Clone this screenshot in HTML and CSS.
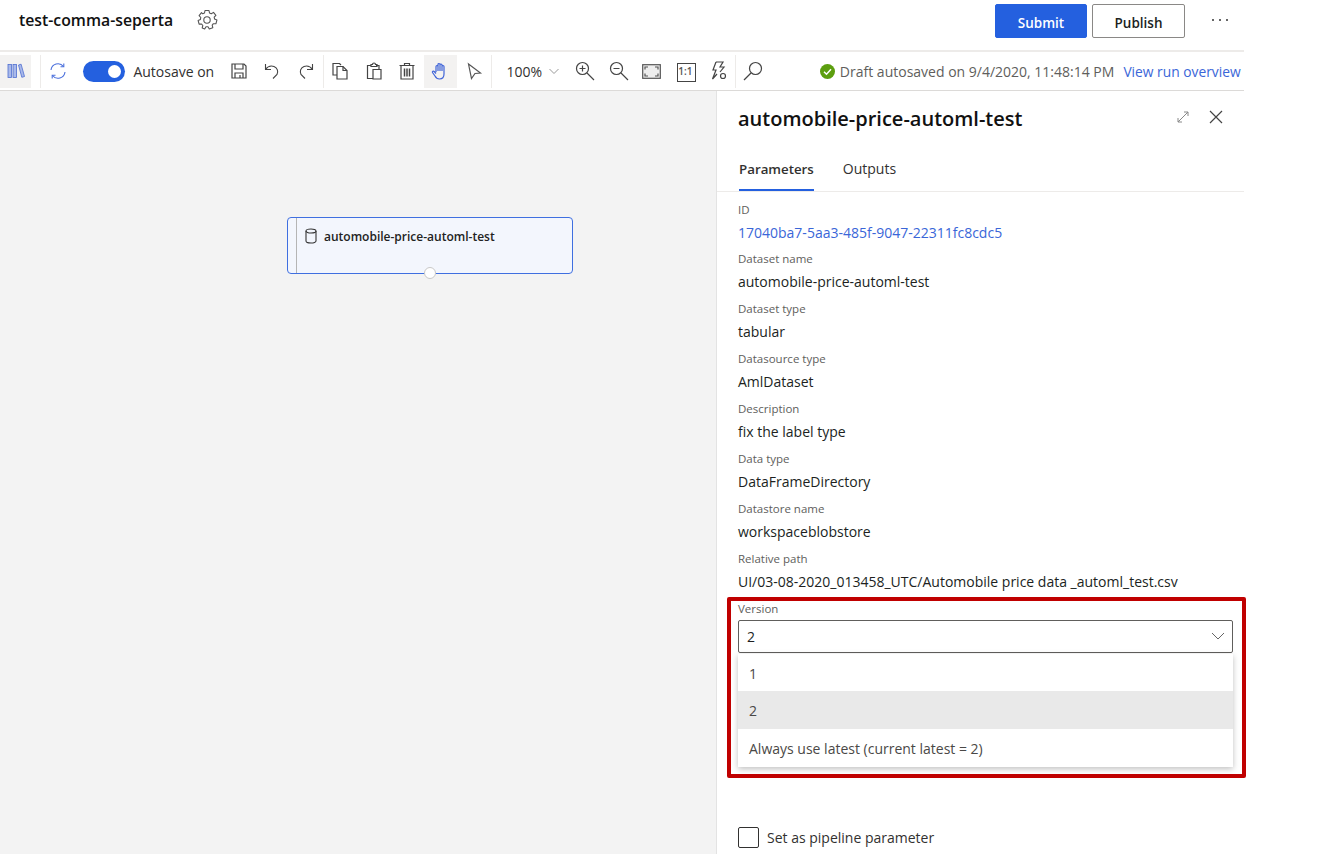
FILE: index.html
```html
<!DOCTYPE html>
<html lang="en">
<head>
  <meta charset="UTF-8" />
  <title>test-comma-seperta</title>
  <link rel="stylesheet" href="styles.css">
</head>
<body>
  <div class="app">
    <header class="topbar">
      <h1 class="title">test-comma-seperta</h1>
      <svg class="gear" width="22" height="22" viewBox="0 0 22 22" fill="none" stroke="#555" stroke-width="1.1"><path d="M9 1.500h4l.5 2.500 1.800.8 2.200-1.400 2.400 2.900-1.700 1.900.4 1.900 2.300 1-1 3.700-2.500-.1-1.200 1.500.6 2.500-3.500 1.300-1.300-2.200h-2l-1.300 2.200L6.200 19l.6-2.500-1.200-1.500-2.500.1-1-3.700 2.300-1 .4-1.900-1.700-1.900 2.400-2.900L6.700 4.800l1.800-.8z" stroke-linejoin="round"/><circle cx="11" cy="11" r="3.200"/></svg>
      <div class="top-actions">
        <button class="btn primary">Submit</button>
        <button class="btn">Publish</button>
        <svg class="more" width="18" height="4" viewBox="0 0 18 4" fill="#333"><circle cx="2" cy="2" r="1"/><circle cx="9" cy="2" r="1"/><circle cx="16" cy="2" r="1"/></svg>
      </div>
    </header>

    <div class="toolbar">
      <span class="tool first active">
        <svg width="18" height="16" viewBox="0 0 18 16" fill="#a9b9ea" stroke="#4f6fd0" stroke-width=".8"><rect x="1" y="1.500" width="3.500" height="13"/><rect x="6" y="1.500" width="3.500" height="13"/><path d="M11.500 2l2.600-.8 3.400 12.300-2.700.8z"/></svg>
      </span>
      <span class="sep"></span>
      <span class="tool">
        <svg width="18" height="18" viewBox="0 0 18 18" fill="none" stroke="#4a6fdc" stroke-width="1.100"><path d="M2 8a7 7 0 0 1 12.500-3.500M16 10a7 7 0 0 1-12.500 3.500"/><path d="M14.800 1.500v3.300h-3.300M3.200 16.500v-3.300h3.300"/></svg>
      </span>
      <span class="toggle"><span class="knob"></span></span>
      <span class="autosave">Autosave on</span>
      <span class="tool">
        <svg width="18" height="18" viewBox="0 0 18 18" fill="none" stroke="#444" stroke-width="1.200"><path d="M2 2h12l2 2v12H2z"/><path d="M5 2v5h8V2M5 16v-5h8v5M10 13v3"/></svg>
      </span>
      <span class="tool">
        <svg width="18" height="18" viewBox="0 0 18 18" fill="none" stroke="#444" stroke-width="1.100"><path d="M2.500 2v5.500H8"/><path d="M2.500 7.500C5 4 8 3.500 11 4.500c3.500 1.500 4.500 5 3 8l-4 4"/></svg>
      </span>
      <span class="tool">
        <svg width="18" height="18" viewBox="0 0 18 18" fill="none" stroke="#444" stroke-width="1.100"><path d="M15.500 2v5.500H10"/><path d="M15.500 7.500C13 4 10 3.500 7 4.500c-3.500 1.500-4.500 5-3 8l4 4"/></svg>
      </span>
      <span class="sep"></span>
      <span class="tool">
        <svg width="18" height="18" viewBox="0 0 18 18" fill="none" stroke="#444" stroke-width="1.200"><path d="M6 13H2V1.500h6.500L10 3"/><path d="M6 4.500h6l4 4v8.500H6z"/><path d="M12 4.500v4h4"/></svg>
      </span>
      <span class="tool">
        <svg width="18" height="18" viewBox="0 0 18 18" fill="none" stroke="#444" stroke-width="1.200"><path d="M6 3.500H2.500V16.500H8"/><path d="M11 3.500h3V7"/><path d="M6 4.500V2.500h1.500a1.500 1.500 0 0 1 3 0H12v2z"/><path d="M8 7.500h8v9.500H8z"/></svg>
      </span>
      <span class="tool">
        <svg width="18" height="18" viewBox="0 0 18 18" fill="none" stroke="#444" stroke-width="1.200"><path d="M1.500 3.500h15M6.500 3.500V1.500h5v2M3 3.500v13.500h12V3.500"/><path d="M6.500 6.500v8M9 6.500v8M11.500 6.500v8" stroke-width="1.500"/></svg>
      </span>
      <span class="tool active">
        <svg width="18" height="18" viewBox="0 0 18 18" fill="none" stroke="#3f63d8" stroke-width="1.200"><path d="M5 10V4.500a1 1 0 0 1 2 0V9M7 9V2.500a1 1 0 0 1 2 0V9M9 9V3a1 1 0 0 1 2 0v6M11 9V4.500a1 1 0 0 1 2 0V12c0 3-1.500 5-4.500 5-2.500 0-3.500-1-4.500-3L1.500 10.500c-.5-1 .8-2 1.700-1L5 11.500"/></svg>
      </span>
      <span class="tool">
        <svg width="18" height="18" viewBox="0 0 18 18" fill="none" stroke="#555" stroke-width="1.200"><path d="M3.500 2l12 9-5.500.5-3.500 5z"/></svg>
      </span>
      <span class="sep"></span>
      <span class="zoom-level">100%</span>
      <svg class="chev" width="12" height="12" viewBox="0 0 12 12" fill="none" stroke="#999"><path d="M1.500 4l4.500 4.500L10.500 4"/></svg>
      <span class="tool">
        <svg width="20" height="20" viewBox="0 0 20 20" fill="none" stroke="#444" stroke-width="1.200"><circle cx="7.500" cy="7.500" r="6"/><path d="M12 12l7 7M7.500 4.500v6M4.500 7.500h6"/></svg>
      </span>
      <span class="tool">
        <svg width="20" height="20" viewBox="0 0 20 20" fill="none" stroke="#444" stroke-width="1.200"><circle cx="7.500" cy="7.500" r="6"/><path d="M12 12l7 7M4.500 7.500h6"/></svg>
      </span>
      <span class="tool">
        <svg width="19" height="15" viewBox="0 0 19 15" fill="none" stroke="#555" stroke-width="1.200"><rect x=".7" y=".7" width="17.600" height="13.600" fill="#eee"/><path d="M3 5.500V3h3M13 3h3v2.500M3 9.500V12h3M16 9.500V12h-3"/></svg>
      </span>
      <span class="tool one-one">1:1</span>
      <span class="tool">
        <svg width="18" height="20" viewBox="0 0 18 20" fill="none" stroke="#444" stroke-width="1.200"><path d="M6 1h7l-3 5h4l-4 5M6 1L3 9h3l-3.500 9 4.500-5"/><circle cx="13" cy="15" r="2.500"/></svg>
      </span>
      <span class="sep"></span>
      <span class="tool">
        <svg width="20" height="20" viewBox="0 0 20 20" fill="none" stroke="#444" stroke-width="1.200"><circle cx="12.500" cy="7.500" r="6"/><path d="M8 12l-7 7"/></svg>
      </span>
      <span class="status">
        <svg width="15" height="15" viewBox="0 0 15 15"><circle cx="7.500" cy="7.500" r="7.500" fill="#5c9e0f"/><path d="M4 7.800l2.500 2.400L11 5.300" fill="none" stroke="#fff" stroke-width="1.500"/></svg>
        Draft autosaved on 9/4/2020, 11:48:14 PM
      </span>
      <a class="link overview">View run overview</a>
    </div>

    <div class="main">
      <div class="canvas">
        <div class="node">
          <svg width="14" height="16" viewBox="0 0 14 16" fill="none" stroke="#333" stroke-width="1.100"><ellipse cx="7" cy="3" rx="5" ry="2"/><path d="M2 3v10c0 1.100 2.200 2 5 2s5-.9 5-2V3"/></svg>
          <span class="node-name">automobile-price-automl-test</span>
          <span class="port"></span>
        </div>
      </div>

      <aside class="panel">
        <div class="panel-head">
          <h2 class="panel-title">automobile-price-automl-test</h2>
          <svg class="head-icon" width="14" height="14" viewBox="0 0 14 14" fill="none" stroke="#888"><path d="M2 12L12 2M8 2h4v4M2 8v4h4"/></svg>
          <svg class="head-icon" width="14" height="14" viewBox="0 0 14 14" fill="none" stroke="#444" stroke-width="1.200"><path d="M1 1l12 12M13 1L1 13"/></svg>
        </div>
        <div class="tabs">
          <span class="tab current">Parameters</span>
          <span class="tab">Outputs</span>
        </div>
        <div class="fields">
          <div class="field"><label>ID</label><div class="value link">17040ba7-5aa3-485f-9047-22311fc8cdc5</div></div>
          <div class="field"><label>Dataset name</label><div class="value">automobile-price-automl-test</div></div>
          <div class="field"><label>Dataset type</label><div class="value">tabular</div></div>
          <div class="field"><label>Datasource type</label><div class="value">AmlDataset</div></div>
          <div class="field"><label>Description</label><div class="value">fix the label type</div></div>
          <div class="field"><label>Data type</label><div class="value">DataFrameDirectory</div></div>
          <div class="field"><label>Datastore name</label><div class="value">workspaceblobstore</div></div>
          <div class="field"><label>Relative path</label><div class="value">UI/03-08-2020_013458_UTC/Automobile price data _automl_test.csv</div></div>
          <div class="field version">
            <label>Version</label>
            <div class="select">
              <span>2</span>
              <svg width="14" height="14" viewBox="0 0 14 14" fill="none" stroke="#666"><path d="M1 4l6 6 6-6"/></svg>
              <ul class="menu">
                <li>1</li>
                <li class="selected">2</li>
                <li>Always use latest (current latest = 2)</li>
              </ul>
            </div>
          </div>
          <div class="check-row"><span class="checkbox"></span>Set as pipeline parameter</div>
        </div>
        <div class="callout"></div>
      </aside>
    </div>
  </div>
</body>
</html>
```

FILE: styles.css
```css
* {
  box-sizing: border-box;
}
html, body {
  height: 100%;
}
body {
  margin: 0;
  background: #fff;
  color: #201f1e;
  font-family: "Open Sans", "Noto Sans", sans-serif;
  font-size: 14px;
  overflow: hidden;
}
.app {
  width: 1244px;
  height: 854px;
  display: flex;
  flex-direction: column;
}
.topbar {
  height: 52px;
  flex: none;
  display: flex;
  align-items: center;
  padding: 0 0 10px 19px;
  border-bottom: 2px solid #edebe9;
}
.title {
  margin: 0;
  font-size: 15.800px;
  font-weight: 600;
  color: #111;
  width: 177px;
  white-space: nowrap;
}
.gear {
  display: block;
}
.top-actions {
  margin-left: auto;
  display: flex;
  align-items: center;
  gap: 5px;
  padding-top: 2px;
}
.btn {
  width: 93px;
  height: 34px;
  background: #fff;
  border: 1px solid #8a8886;
  border-radius: 2px;
  font: 600 13.500px "Open Sans", sans-serif;
  color: #201f1e;
  padding: 3px 0 0;
}
.btn.primary {
  width: 92px;
  background: #2460df;
  border-color: #2460df;
  color: #fff;
}
.more {
  margin: -2px 15px 0 21px;
}
.toolbar {
  height: 39px;
  flex: none;
  display: flex;
  align-items: center;
  border-bottom: 1px solid #dcdad8;
  white-space: nowrap;
}
.tool {
  width: 33.400px;
  height: 33px;
  flex: none;
  display: flex;
  align-items: center;
  justify-content: center;
}
.tool.first {
  width: 31px;
}
.tool.active {
  background: #f3f2f1;
}
.sep {
  width: 1px;
  height: 33px;
  flex: none;
  background: #edebe9;
}
.toolbar > .first + .sep {
  margin-left: 9px;
}
.toggle {
  width: 42px;
  height: 21px;
  flex: none;
  margin-left: 9px;
  border-radius: 11px;
  background: #2460df;
  display: flex;
  justify-content: flex-end;
  align-items: center;
  padding-right: 4px;
}
.knob {
  width: 13px;
  height: 13px;
  border-radius: 50%;
  background: #fff;
}
.autosave {
  width: 89px;
  margin-left: 8px;
  color: #323130;
}
.zoom-level {
  width: 41px;
  margin-left: 15px;
  color: #323130;
}
.chev {
  flex: none;
  margin-right: 9px;
}
.one-one {
  font-size: 10px;
  font-weight: 600;
  color: #555;
  position: relative;
}
.one-one::before {
  content: "";
  position: absolute;
  left: 8px;
  top: 8px;
  width: 17px;
  height: 17px;
  border: 1.500px solid #444;
}
.status {
  margin-left: 50px;
  display: flex;
  align-items: center;
  gap: 5px;
  color: #605e5c;
}
.link {
  color: #3a66d8;
}
.overview {
  margin-left: 9px;
  font-size: 13.800px;
}
.main {
  flex: 1;
  display: flex;
  min-height: 0;
}
.canvas {
  width: 717px;
  flex: none;
  background: #f3f3f3;
  position: relative;
  border-right: 1px solid #e3e3e3;
}
.node {
  position: absolute;
  left: 287px;
  top: 126px;
  width: 286px;
  height: 57px;
  padding: 10px 0 0 16px;
  background: #f3f6fd;
  border: 1px solid #3f6fe0;
  border-radius: 4px;
  display: flex;
  align-items: flex-start;
  gap: 6px;
}
.node::before {
  content: "";
  position: absolute;
  left: 8px;
  top: 0;
  bottom: 0;
  width: 1px;
  background: #b5b5b5;
}
.node-name {
  font-size: 12px;
  font-weight: 600;
  color: #222;
}
.port {
  position: absolute;
  left: 136px;
  bottom: -6px;
  width: 12px;
  height: 12px;
  border-radius: 50%;
  background: #fff;
  border: 1px solid #c8c8c8;
}
.panel {
  flex: 1;
  position: relative;
}
.panel-head {
  height: 60px;
  display: flex;
  align-items: center;
  padding: 0 21px 6px 21px;
  gap: 19px;
}
.head-icon {
  margin-top: -2px;
}
.panel-title {
  margin: 0 auto 0 0;
  font-size: 20px;
  font-weight: 600;
  color: #111;
}
.tabs {
  height: 41px;
  display: flex;
  gap: 29px;
  padding-left: 22px;
  border-bottom: 1px solid #edebe9;
}
.tab {
  height: 40px;
  line-height: 36px;
  color: #323130;
}
.tab.current {
  font-size: 13.300px;
  font-weight: 600;
  border-bottom: 2px solid #2460df;
}
.fields {
  padding: 7.600px 11px 0 21px;
}
.field {
  height: 49.900px;
}
.field label {
  display: block;
  font-size: 11.500px;
  line-height: 20px;
  color: #605e5c;
}
.value {
  line-height: 26px;
  white-space: nowrap;
}
.select {
  height: 33px;
  margin-top: 1px;
  position: relative;
  display: flex;
  align-items: center;
  justify-content: space-between;
  padding: 0 7px 0 8px;
  border: 1px solid #605e5c;
  border-radius: 2px;
}
.menu {
  position: absolute;
  left: -1px;
  right: -1px;
  top: 33px;
  margin: 0;
  padding: 0;
  list-style: none;
  background: #fff;
  color: #4a4846;
  box-shadow: 0 2px 6px rgba(0, 0, 0, .25);
  z-index: 2;
}
.menu li {
  height: 37.700px;
  line-height: 39px;
  padding-left: 11px;
}
.menu .selected {
  background: #e9e9e9;
}
.check-row {
  margin-top: 178px;
  display: flex;
  align-items: center;
  gap: 8px;
  color: #323130;
}
.checkbox {
  width: 21px;
  height: 21px;
  border: 1px solid #323130;
  border-radius: 2px;
}
.callout {
  position: absolute;
  left: 10px;
  top: 506px;
  width: 519px;
  height: 181px;
  border: 4px solid #c00000;
  border-radius: 2px;
  z-index: 3;
  pointer-events: none;
}
```
